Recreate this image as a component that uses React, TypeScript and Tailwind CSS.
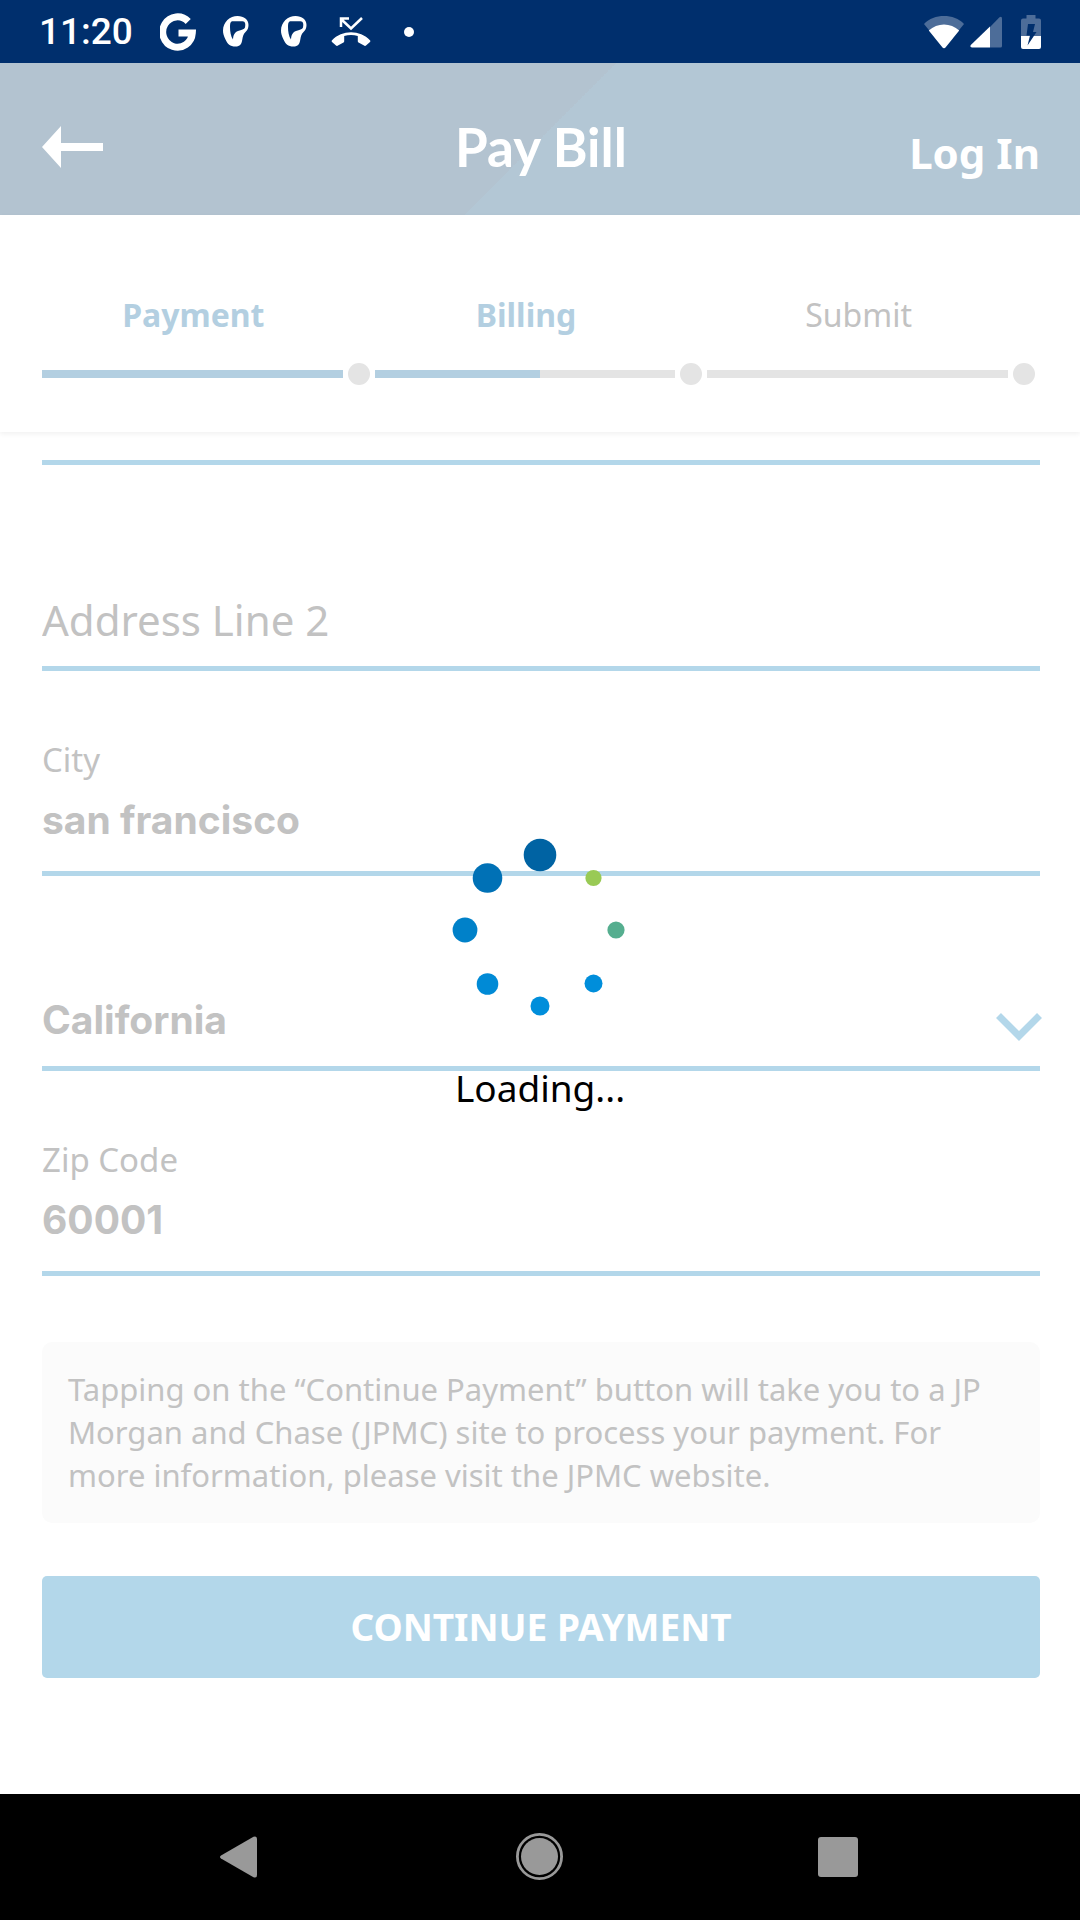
import React from "react";

const steps = [
  { name: "Payment", progress: 100 },
  { name: "Billing", progress: 55 },
  { name: "Submit", progress: 0 },
];

const spinnerDots = [
  { x: 76, y: 17, r: 16.3, color: "#0063a3" },
  { x: 23.5, y: 40, r: 14.8, color: "#0071b6" },
  { x: 1, y: 92, r: 12.4, color: "#0081c9" },
  { x: 23.5, y: 146, r: 10.8, color: "#008ad6" },
  { x: 76, y: 168, r: 9.5, color: "#008edb" },
  { x: 129.5, y: 145.5, r: 9, color: "#008edb" },
  { x: 152, y: 92, r: 8.6, color: "#55ae8f" },
  { x: 129.5, y: 40, r: 8.1, color: "#99ca55" },
];

function LeafIcon() {
  return (
    <svg width="26" height="31" viewBox="0 0 26 31" aria-hidden="true">
      <path
        fill="#fff"
        fillRule="evenodd"
        d="M14.500 0C21 0 25.500 3.500 25.500 9C25.500 12 24.500 14 22.500 16C20.500 18 19.800 20 19.300 23.500C18.700 28 17 30.500 12.500 30.500C7 30.500 4.500 28 2.500 23.500C.8 20 0 17.500 0 14.500C0 6 7 0 14.500 0ZM9 5.300C7.200 6 7 8 7 11C7 15.500 7.800 20.500 10 23.500C10.200 19 11.500 16.500 15 15C18.500 13.800 21.300 13.500 22 11.500C22.700 8.500 22.500 5.300 19.500 5.300Z"
      />
    </svg>
  );
}

function StatusBar() {
  return (
    <div className="flex h-[63px] items-center justify-between bg-[#002f6d] px-[39px] text-white">
      <div className="flex items-center">
        <span className="w-[121px] font-['Roboto',sans-serif] text-[37px] leading-[44px] font-medium">11:20</span>
        <svg width="36" height="38" viewBox="0 0 36 38" aria-hidden="true">
          <path
            fill="none"
            stroke="#fff"
            strokeWidth="7"
            d="M28.200 8.500A14.800 15.200 0 1 0 32.300 20H18.500"
          />
        </svg>
        <div className="ml-[27px] flex gap-8">
          <LeafIcon />
          <LeafIcon />
        </div>
        <svg className="ml-6" width="40" height="32" viewBox="0 0 40 32" aria-hidden="true">
          <path fill="none" stroke="#fff" strokeWidth="2.500" d="M10 11V2.500H18M10 3L20 12.500L31 2" />
          <path
            fill="#fff"
            d="M.8 24.500C6 19 13 16.300 20 16.300S34 19 39.200 24.500C39.500 25 39.500 25.500 39 26L35 29.500C34.500 30 34 30 33.500 29.700L27.500 26.500C27 26.300 26.800 25.800 26.800 25.300V20C22.500 18.500 17.500 18.500 13.200 20V25.300C13.200 25.800 13 26.300 12.500 26.500L6.500 29.700C6 30 5.500 30 5 29.500L1 26C.5 25.500 .5 25 .8 24.500Z"
          />
        </svg>
        <span className="ml-[33px] size-[10px] rounded-full bg-white" />
      </div>
      <div className="flex items-center">
        <svg width="40" height="34" viewBox="0 0 40 34" aria-hidden="true">
          <path fill="#4d6d99" d="M20 33.500L0 9C5 3.500 12.500 1 20 1S35 3.500 40 9Z" />
          <path fill="#fff" d="M18.500 32.500L4.800 15.500C9 11.500 14.500 9.500 20 9.500S31 11.500 35.200 15.500L21.500 32.500Q20 34 18.500 32.500Z" />
        </svg>
        <svg className="ml-1.5" width="32" height="32" viewBox="0 0 32 32" aria-hidden="true">
          <path fill="#4d6d99" d="M20 31.500V11L29.500 1.200Q32 0 32 2.500V30Q32 31.500 30.500 31.500Z" />
          <path fill="#fff" d="M20 31.500H2Q-.5 31 .8 29L20 10.500Z" />
        </svg>
        <svg className="ml-[19px]" width="20" height="34" viewBox="0 0 20 34" aria-hidden="true">
          <path fill="#4d6d99" d="M5.500 0H14.500V3.500H18Q20 3.500 20 5.500V21H0V5.500Q0 3.500 2 3.500H5.500Z" />
          <path fill="#fff" d="M0 21H20V32Q20 34 18 34H2Q0 34 0 32Z" />
          <path fill="#002f6d" d="M7 9H14L12 17H15.500L6.500 30.500L9 20.500H5.500Z" />
        </svg>
      </div>
    </div>
  );
}

function Header() {
  return (
    <header className="grid h-[152px] grid-cols-3 items-center bg-[linear-gradient(135deg,#b3c3d0_50%,#b3c7d5_50%)] pr-10 pl-[42px] text-white">
      <button type="button" aria-label="Back" className="justify-self-start pt-4">
        <svg width="62" height="42" viewBox="0 0 62 42" aria-hidden="true">
          <path fill="#fff" d="M0 21L19 0V17H61V25H19V42Z" />
        </svg>
      </button>
      <h1 className="justify-self-center pt-4 font-['Lato',sans-serif] text-[53px] leading-[64px] font-bold">Pay Bill</h1>
      <a href="#login" className="justify-self-end pt-7 text-[42px] leading-[56px] font-bold">
        Log In
      </a>
    </header>
  );
}

function Stepper() {
  return (
    <ol className="relative grid grid-cols-3 bg-white pt-[78px] pr-10 pb-[47px] pl-[42px] shadow-[0_2px_5px_rgba(0,0,0,0.06)]">
      {steps.map((step) => (
        <li key={step.name} className="flex flex-col gap-[26px]">
          <span
            className={
              step.progress > 0
                ? "pr-[30px] text-center text-[32px] leading-[44px] font-bold text-[#b3cfe1]"
                : "pr-[30px] text-center text-[32px] leading-[44px] text-[#c2c2c2]"
            }
          >
            {step.name}
          </span>
          <div className="flex items-center gap-[5px] pr-[5px]">
            <div className="h-2 flex-1 bg-[#e4e4e4]">
              <div className="h-2 bg-[#b3cfe1]" style={{ width: `${step.progress}%` }} />
            </div>
            <span className="size-[22px] rounded-full bg-[#e4e4e4]" />
          </div>
        </li>
      ))}
    </ol>
  );
}

function TextField({ id, label, value }: { id: string; label: string; value: string }) {
  return (
    <div className="flex h-[205px] flex-col justify-end border-b-[5px] border-[#b3d7ea]">
      <label htmlFor={id} className="text-[33px] leading-[48px] text-[#c2c2c2]">
        {label}
      </label>
      <input
        id={id}
        defaultValue={value}
        className="mt-3 mb-[27px] h-12 w-full font-['Inter',sans-serif] text-[39px] leading-[48px] font-bold text-[#c2c2c2] outline-none"
      />
    </div>
  );
}

function Loader() {
  return (
    <div role="status" className="absolute inset-x-0 top-[406px] flex flex-col items-center gap-[46px]">
      <svg width="180" height="180" viewBox="-14 0 180 180" aria-hidden="true">
        {spinnerDots.map((dot) => (
          <circle key={`${dot.x}-${dot.y}`} cx={dot.x} cy={dot.y} r={dot.r} fill={dot.color} />
        ))}
      </svg>
      <span className="text-[37px] leading-[48px] text-black">Loading...</span>
    </div>
  );
}

function NavBar() {
  return (
    <nav className="grid h-[126px] grid-cols-[1fr_200px_1fr] items-center bg-black">
      <button type="button" aria-label="Back" className="mr-[183px] justify-self-end">
        <svg width="37" height="42" viewBox="0 0 37 42" aria-hidden="true">
          <path fill="#999" d="M1 19.500L33.500 .8Q37 -.5 37 3V39Q37 42.500 33.500 41.200L1 22.500Q-1 21 1 19.500Z" />
        </svg>
      </button>
      <button type="button" aria-label="Home" className="justify-self-center">
        <svg width="48" height="48" viewBox="0 0 48 48" aria-hidden="true">
          <circle cx="23.500" cy="23.500" r="22.100" fill="none" stroke="#999" strokeWidth="2.800" />
          <circle cx="23.500" cy="23.500" r="18.500" fill="#999" />
        </svg>
      </button>
      <button type="button" aria-label="Recent apps" className="ml-[178px] size-10 justify-self-start rounded-[3px] bg-[#999]" />
    </nav>
  );
}

export default function App() {
  return (
    <div className="flex min-h-screen flex-col bg-white font-['Noto_Sans',sans-serif]">
      <StatusBar />
      <Header />
      <Stepper />
      <main className="relative flex-1">
        <form className="pr-10 pb-[116px] pl-[42px]">
          <input
            aria-label="Address Line 1"
            className="block h-[33px] w-full border-b-[5px] border-[#b3d7ea] outline-none"
          />
          <div className="flex h-[206px] flex-col justify-end border-b-[5px] border-[#b3d7ea]">
            <input
              aria-label="Address Line 2"
              placeholder="Address Line 2"
              className="mb-[18px] h-14 w-full text-[42px] leading-[56px] outline-none placeholder:text-[#c2c2c2]"
            />
          </div>
          <TextField id="city" label="City" value="san francisco" />
          <div className="relative flex h-[195px] flex-col justify-end border-b-[5px] border-[#b3d7ea]">
            <select
              aria-label="State"
              defaultValue="California"
              className="mb-[22px] h-12 w-full appearance-none font-['Inter',sans-serif] text-[39px] leading-[48px] font-bold text-[#c2c2c2] outline-none"
            >
              <option>California</option>
            </select>
            <svg className="pointer-events-none absolute -right-0.5 bottom-[25px]" width="46" height="28" viewBox="0 0 46 28" aria-hidden="true">
              <path fill="none" stroke="#b3d7ea" strokeWidth="7" d="M2.500 2.500L23 23L43.500 2.500" />
            </svg>
          </div>
          <TextField id="zip" label="Zip Code" value="60001" />
          <p className="mt-[66px] rounded-[10px] bg-[#fbfbfb] px-[26px] py-[26px] text-[31px] leading-[43px] text-[#c2c2c2]">
            Tapping on the “Continue Payment” button will take you to a JP Morgan and Chase (JPMC) site to process
            your payment. For more information, please visit the JPMC website.
          </p>
          <button
            type="button"
            className="mt-[53px] block h-[102px] w-full rounded-[5px] bg-[#b3d7ea] text-[37px] leading-[52px] font-bold text-white"
          >
            CONTINUE PAYMENT
          </button>
        </form>
        <Loader />
      </main>
      <NavBar />
    </div>
  );
}
